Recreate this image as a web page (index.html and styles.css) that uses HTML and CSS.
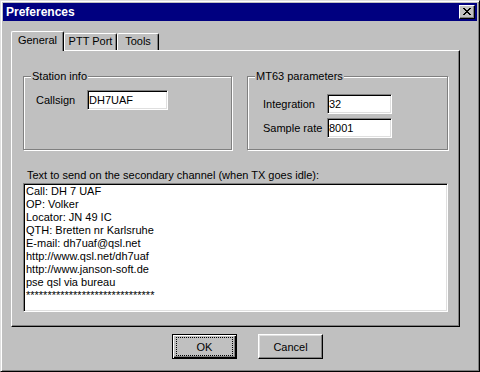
FILE: index.html
```html
<!DOCTYPE html>
<html lang="en">
<head>
  <meta charset="UTF-8">
  <title>Preferences</title>
  <link rel="stylesheet" href="styles.css">
</head>
<body>

  <div class="window">
    <div class="titlebar">
      <span class="title">Preferences</span>
      <button class="close" title="Close">
        <svg width="8" height="7" viewBox="0 0 8 7" shape-rendering="crispEdges"><path d="M0 0h2v1H0zM6 0h2v1H6zM1 1h2v1H1zM5 1h2v1H5zM2 2h4v1H2zM3 3h2v1H3zM2 4h4v1H2zM1 5h2v1H1zM5 5h2v1H5zM0 6h2v1H0zM6 6h2v1H6z" fill="#000"/></svg>
      </button>
    </div>

    <div class="tabs">
      <div class="tab active">General</div>
      <div class="tab tab-ptt">PTT Port</div>
      <div class="tab tab-tools">Tools</div>
    </div>

    <div class="panel">
      <div class="groups">
        <fieldset class="group station">
          <legend>Station info</legend>
          <div class="field">
            <label for="callsign">Callsign</label>
            <input class="edit" id="callsign" type="text" value="DH7UAF">
          </div>
        </fieldset>
        <fieldset class="group params">
          <legend>MT63 parameters</legend>
          <div class="field">
            <label for="integration">Integration</label>
            <input class="edit" id="integration" type="text" value="32">
          </div>
          <div class="field">
            <label for="samplerate">Sample rate</label>
            <input class="edit" id="samplerate" type="text" value="8001">
          </div>
        </fieldset>
      </div>
      <label class="memo-label" for="idletext">Text to send on the secondary channel (when TX goes idle):</label>
      <textarea class="memo" id="idletext" spellcheck="false">Call: DH 7 UAF
OP: Volker
Locator: JN 49 IC
QTH: Bretten nr Karlsruhe
E-mail: dh7uaf@qsl.net
http://www.qsl.net/dh7uaf
http://www.janson-soft.de
pse qsl via bureau
******************************</textarea>
    </div>

    <div class="buttons">
      <button class="btn default"><span class="focus">OK</span></button>
      <button class="btn"><span class="nofocus">Cancel</span></button>
    </div>
  </div>

</body>
</html>
```

FILE: styles.css
```css
body { margin: 0; background: #c0c0c0; font-family: "Liberation Sans", Arial, sans-serif; font-size: 11px; color: #000; }

.window { width: 480px; height: 372px; box-sizing: border-box; padding: 2px; background: #c0c0c0;
  border: 1px solid; border-color: #dfdfdf #000 #000 #dfdfdf; box-shadow: inset 1px 1px #fff, inset -1px -1px #808080; }

.titlebar { height: 18px; display: flex; align-items: center; padding: 0 2px 0 3px; background: #000080; }
.title { color: #fff; font-weight: bold; font-size: 12px; line-height: 14px; }
.close { margin-left: auto; width: 16px; height: 14px; padding: 0 0 1px 0; box-sizing: border-box; display: flex; align-items: center; justify-content: center;
  background: #c0c0c0; border: 1px solid; border-color: #fff #000 #000 #fff; box-shadow: inset -1px -1px #808080; }
.close svg { display: block; }

/* tab strip */
.tabs { display: flex; align-items: flex-end; height: 19px; margin: 10px 0 0 8px; }
.tab { box-sizing: border-box; height: 17px; padding-top: 1px; line-height: 13px; text-align: center; background: #c0c0c0;
  border: 1px solid; border-bottom: none; border-color: #fff #000 #000 #fff; border-radius: 2px 2px 0 0; box-shadow: inset -1px 0 #808080; }
.tab.active { width: 53px; height: 20px; margin-bottom: -1px; padding-top: 2px; position: relative; z-index: 1; }
.tab-ptt { width: 53px; }
.tab-tools { width: 42px; }

.panel { width: 449px; height: 277px; box-sizing: border-box; margin-left: 8px; padding: 19px 11px 0 11px;
  border: 1px solid; border-color: #fff #000 #000 #fff; box-shadow: inset -1px -1px #808080; }

/* group boxes */
.groups { display: grid; grid-template-columns: 209px 201px; column-gap: 15px; }
.group { margin: 0; padding: 0 7px; min-width: 0; height: 80px; box-sizing: border-box;
  border: 1px solid #808080; box-shadow: inset 1px 1px #fff, 1px 1px #fff; }
.group legend { padding: 0 1px; line-height: 13px; background: #c0c0c0; }

.field { display: flex; align-items: center; }
.field label { flex-shrink: 0; }
.station .field { margin-top: 7px; }
.station label { width: 51px; margin-left: 5px; }
.station .edit { width: 81px; }
.params .field { margin-top: 4px; }
.params .field:first-of-type { margin-top: 11px; }
.params label { width: 64px; margin-left: 8px; }
.params .edit { width: 65px; }

.edit { height: 20px; box-sizing: border-box; padding: 0 1px; margin: 0; font: inherit; background: #fff; outline: none;
  border: 1px solid; border-color: #808080 #fff #fff #808080; box-shadow: inset 1px 1px #000, inset -1px -1px #dfdfdf; }

.memo-label { display: block; margin-top: 19px; padding-left: 4px; line-height: 13px; }
.memo { display: block; width: 425px; height: 129px; box-sizing: border-box; margin: 1px 0 0 0; padding: 1px 2px; resize: none; overflow: hidden;
  font: inherit; line-height: 13px; background: #fff; outline: none;
  border: 1px solid; border-color: #808080 #fff #fff #808080; box-shadow: inset 1px 1px #000, inset -1px -1px #dfdfdf; }

/* buttons */
.buttons { display: flex; gap: 21px; margin-top: 7px; padding-left: 169px; }
.btn { width: 65px; height: 25px; box-sizing: border-box; padding: 2px 3px; display: flex; font: inherit; background: #c0c0c0;
  border: 1px solid; border-color: #fff #000 #000 #fff; box-shadow: inset -1px -1px #808080, inset 1px 1px #dfdfdf; }
.btn.default { border-color: #000; box-shadow: inset 1px 1px #fff, inset -1px -1px #000, inset -2px -2px #808080; }
.btn span { flex: 1; display: flex; align-items: center; justify-content: center; border: 1px solid transparent; }
.btn .focus { border: 1px dotted #000; }
```
